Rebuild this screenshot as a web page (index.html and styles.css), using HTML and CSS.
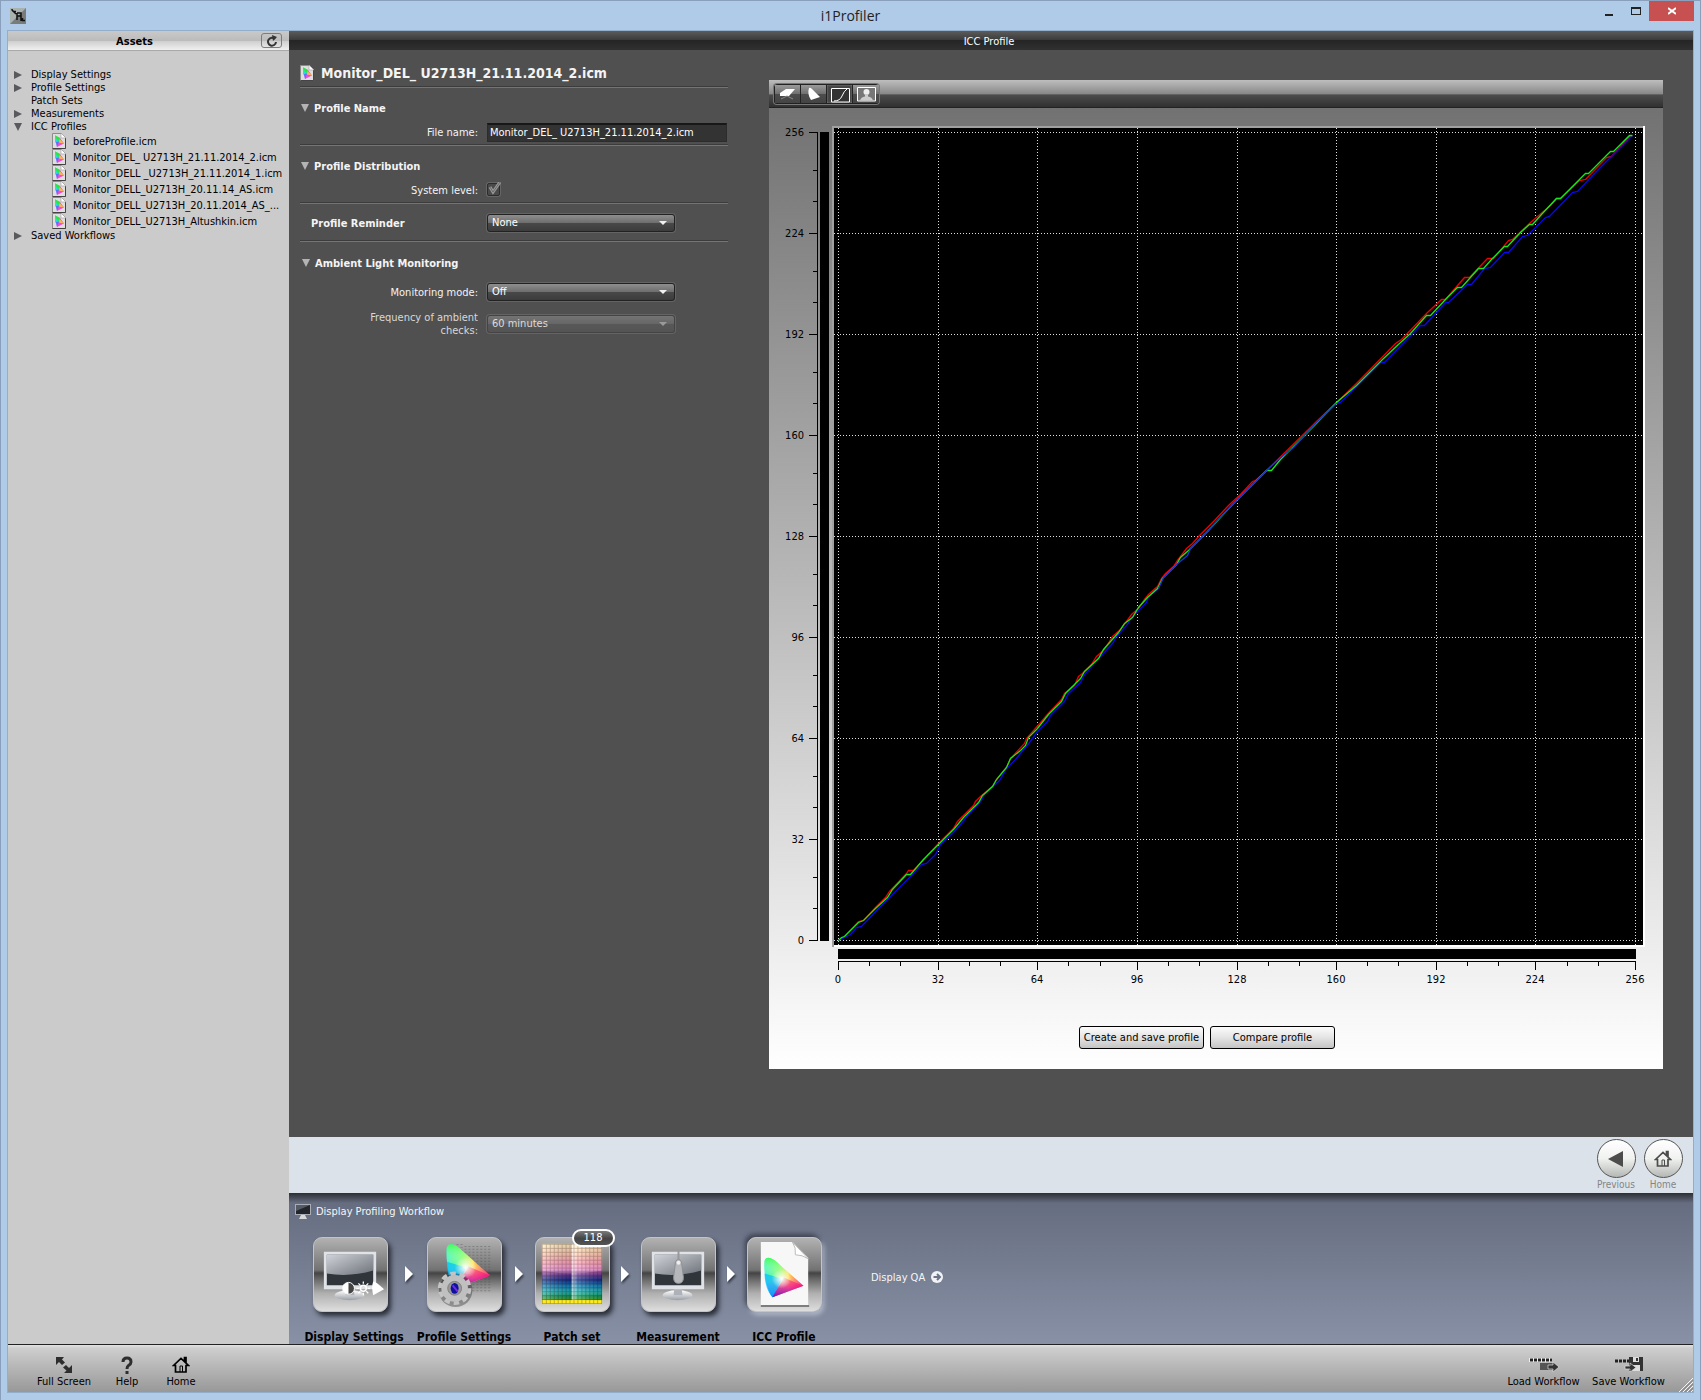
FILE: index.html
```html
<!DOCTYPE html>
<html lang="en">
<head>
<meta charset="utf-8">
<title>i1Profiler</title>
<link rel="stylesheet" href="styles.css">
</head>
<body>
<svg class="defs" aria-hidden="true">
  <defs>
    <linearGradient id="screen" x1="0" y1="0" x2="1" y2="1"><stop offset="0" stop-color="#cfd2d8"/><stop offset="1" stop-color="#6d7179"/></linearGradient>
    <linearGradient id="gloss" x1="0" y1="0" x2="0" y2="1"><stop offset="0" stop-color="#ffffff"/><stop offset="1" stop-color="#9aa0a8"/></linearGradient>
    <linearGradient id="hue" x1="0" y1="0" x2="1" y2="0"><stop offset="0" stop-color="#22f0c8"/><stop offset=".35" stop-color="#7dff6a"/><stop offset=".6" stop-color="#ffe24a"/><stop offset="1" stop-color="#ff1010"/></linearGradient>
    <linearGradient id="hue2" x1="0" y1="0" x2="0" y2="1"><stop offset="0" stop-color="#40ff50" stop-opacity=".9"/><stop offset=".45" stop-color="#ffffff" stop-opacity=".1"/><stop offset=".7" stop-color="#e040ff" stop-opacity=".55"/><stop offset="1" stop-color="#1010ff"/></linearGradient>
    <radialGradient id="white"><stop offset="0" stop-color="#fff"/><stop offset="1" stop-color="#fff" stop-opacity="0"/></radialGradient>
    <linearGradient id="patches" x1="0" y1="0" x2="0" y2="1">
      <stop offset="0" stop-color="#fff2b0"/><stop offset=".16" stop-color="#ffc8a0"/><stop offset=".3" stop-color="#ff98a8"/><stop offset=".42" stop-color="#f88cd0"/><stop offset=".5" stop-color="#7a3c9c"/><stop offset=".6" stop-color="#0c3090"/><stop offset=".7" stop-color="#0a88c0"/><stop offset=".8" stop-color="#18c0b8"/><stop offset=".88" stop-color="#10a050"/><stop offset=".93" stop-color="#40a820"/><stop offset=".94" stop-color="#ffee20"/><stop offset="1" stop-color="#f8e820"/>
    </linearGradient>
    <linearGradient id="patchcols" x1="0" y1="0" x2="1" y2="0">
      <stop offset="0" stop-color="#fff" stop-opacity=".3"/><stop offset=".48" stop-color="#200030" stop-opacity=".15"/><stop offset=".5" stop-color="#fff" stop-opacity=".65"/><stop offset=".6" stop-color="#fff" stop-opacity=".25"/><stop offset="1" stop-color="#300010" stop-opacity=".15"/>
    </linearGradient>
    <pattern id="cells" width="4" height="4" patternUnits="userSpaceOnUse"><path d="M0 0H4M0 0V4" stroke="#20000058" stroke-width="1.500"/></pattern>
  </defs>
  <symbol id="gamut" viewBox="0 0 48 48">
    <path d="M2 6C4-1 12 3 20 11L46 34 11 47C4 38 1 20 2 6Z" fill="url(#hue)"/>
    <path d="M2 6C4-1 12 3 20 11L46 34 11 47C4 38 1 20 2 6Z" fill="url(#hue2)"/>
    <path d="M46 34 11 47 24 25Z" fill="#ff0060" opacity=".45"/>
    <path d="M2 20C2 32 6 42 11 47L22 26Z" fill="#00c0ff" opacity=".7"/>
    <circle cx="21" cy="26" r="11" fill="url(#white)"/>
  </symbol>
  <symbol id="profile" viewBox="0 0 14 16">
    <path d="M.5.5H9.500L13.500 4.500V15.500H.5Z" fill="#dedede" stroke="#8c8c8c"/>
    <path d="M.5 15.500H13.500V5" fill="none" stroke="#444"/>
    <path d="M9 0V5H14Z" fill="#fff" stroke="#999" stroke-width=".6"/>
    <path d="M3 2.500 8 5 12 10.500 5 14Z" fill="#f04ce0"/>
    <path d="M3 2.500 6 4.500 7.500 8 4.500 11 3 9Z" fill="#20e0d8"/>
    <path d="M3 2.500 8 5 8.500 8 5 7Z" fill="#30e830"/><path d="M7.500 6 12 10.500 7 9.500Z" fill="#ffb850"/><path d="M4 9 7 8.500 5 14Z" fill="#5a70ff"/>
  </symbol>
  <symbol id="closed" viewBox="0 0 10 10"><path d="M1 1 9 5 1 9Z" fill="#5a5a5e"/></symbol>
  <symbol id="open" viewBox="0 0 10 10"><path d="M1 1H9L5 9Z" fill="currentColor"/></symbol>
  <symbol id="house" viewBox="0 0 18 18"><path d="M1.500 9.500 9 2.500 16.500 9.500H14V16H3.500V9.500ZM12.500 5V1.500H14V7" fill="none" stroke="currentColor" stroke-width="1.700"/><path d="M8 16V10H10.500V16" fill="none" stroke="currentColor"/></symbol>
  <symbol id="next" viewBox="0 0 8 16"><path d="M0 0 8 8 0 16Z" fill="#fff"/></symbol>
  <symbol id="display" viewBox="0 0 74 74">
    <ellipse cx="36" cy="58" rx="15" ry="5" fill="url(#gloss)"/><path d="M33 50H40L41 58H32Z" fill="#aeb2b8"/>
    <path d="M10 14H63V52H10Z" fill="#dfe2e6"/><path d="M13 17H60V48H13Z" fill="#30343b"/>
    <path d="M13 17H60V33Q36 40 13 36Z" fill="url(#screen)"/>
  </symbol>
</svg>

<div class="window">
  <header class="titlebar">
    <svg class="app-icon" viewBox="0 0 16 16" aria-hidden="true"><rect width="16" height="16" fill="#aab2b0"/><path d="M0 16 16 0V16Z" fill="#777d7b"/><path d="M2 1Q2 4 6 3.500M3 3 6 6M7 5V12M7 5H11V13M7 8H11M12.500 10V12.500H15" fill="none" stroke="#111" stroke-width="1.500"/></svg>
    <h1>i1Profiler</h1>
    <div class="window-buttons">
      <button class="win-btn" aria-label="Minimize"><svg width="10" height="10"><path d="M1 9H9" stroke="#222" stroke-width="2"/></svg></button>
      <button class="win-btn" aria-label="Maximize"><svg width="10" height="8"><path d="M0 0H10V8H0ZM1 2V7H9V2Z" fill="#222" fill-rule="evenodd"/></svg></button>
      <button class="win-btn close" aria-label="Close"><svg width="8" height="8"><path d="M0 1 8 7M8 1 0 7" stroke="#fff" stroke-width="2"/></svg></button>
    </div>
  </header>

  <div class="client">
    <div class="workspace">
      <aside class="sidebar">
        <div class="sidebar-head">
          <h2>Assets</h2>
          <button class="refresh" aria-label="Refresh"><svg width="12" height="12" viewBox="0 0 12 12"><path d="M9 4A4 4 0 1 0 10 7" fill="none" stroke="#333" stroke-width="2"/><path d="M6 0 11 2 7 6Z" fill="#333"/></svg></button>
        </div>
        <ul class="tree">
          <li><svg class="twist"><use href="#closed"/></svg>Display Settings</li>
          <li><svg class="twist"><use href="#closed"/></svg>Profile Settings</li>
          <li><span class="twist"></span>Patch Sets</li>
          <li><svg class="twist"><use href="#closed"/></svg>Measurements</li>
          <li><svg class="twist"><use href="#open"/></svg>ICC Profiles</li>
          <li class="file"><svg class="doc"><use href="#profile"/></svg>beforeProfile.icm</li>
          <li class="file"><svg class="doc"><use href="#profile"/></svg>Monitor_DEL_ U2713H_21.11.2014_2.icm</li>
          <li class="file"><svg class="doc"><use href="#profile"/></svg>Monitor_DELL _U2713H_21.11.2014_1.icm</li>
          <li class="file"><svg class="doc"><use href="#profile"/></svg>Monitor_DELL_U2713H_20.11.14_AS.icm</li>
          <li class="file"><svg class="doc"><use href="#profile"/></svg>Monitor_DELL_U2713H_20.11.2014_AS_...</li>
          <li class="file"><svg class="doc"><use href="#profile"/></svg>Monitor_DELL_U2713H_Altushkin.icm</li>
          <li><svg class="twist"><use href="#closed"/></svg>Saved Workflows</li>
        </ul>
      </aside>

      <main class="main">
        <h2 class="main-head">ICC Profile</h2>
        <div class="content">
          <form class="settings">
            <h3 class="file-title"><svg class="doc"><use href="#profile"/></svg>Monitor_DEL_ U2713H_21.11.2014_2.icm</h3>
            <section class="group name-group">
              <h4><svg class="twist"><use href="#open"/></svg>Profile Name</h4>
              <div class="field"><label for="fname">File name:</label><input id="fname" class="text" type="text" value="Monitor_DEL_ U2713H_21.11.2014_2.icm"></div>
            </section>
            <section class="group dist-group">
              <h4><svg class="twist"><use href="#open"/></svg>Profile Distribution</h4>
              <div class="field"><label for="syslevel">System level:</label><span class="check"><input id="syslevel" type="checkbox" checked disabled><svg viewBox="0 0 14 14" aria-hidden="true"><path d="M3 5 6 10 13 0" fill="none" stroke="#989898" stroke-width="3"/><path d="M3 5 6 10 13 0" fill="none" stroke="#6a6a6a"/></svg></span></div>
            </section>
            <section class="group reminder">
              <div class="field"><label class="strong" for="reminder">Profile Reminder</label><span class="select"><select id="reminder"><option>None</option></select></span></div>
            </section>
            <section class="group ambient">
              <h4><svg class="twist"><use href="#open"/></svg>Ambient Light Monitoring</h4>
              <div class="field"><label for="mode">Monitoring mode:</label><span class="select"><select id="mode"><option>Off</option></select></span></div>
              <div class="field freq"><label for="freq">Frequency of ambient<br>checks:</label><span class="select off"><select id="freq" disabled><option>60 minutes</option></select></span></div>
            </section>
          </form>

          <section class="viewer">
            <div class="toolbar">
              <div class="tools">
                <button aria-label="3D gamut"><svg viewBox="0 0 26 18"><path d="M5 8 11 4H20L14 11H5Z" fill="#fff"/><path d="M6 14 12 11 18 14" fill="none" stroke="#888"/></svg></button>
                <button aria-label="2D gamut"><svg viewBox="0 0 26 18"><path d="M8 3Q9 2 11 4L19 12 10 15Q6 9 8 3Z" fill="#fff"/></svg></button>
                <button class="on" aria-label="Curves"><svg viewBox="0 0 26 18"><path d="M4.500 3.500H22.500V17H4.500Z" fill="#333" stroke="#fff"/><path d="M7 16Q13 16 15 11T20 4" fill="none" stroke="#fff"/></svg></button>
                <button aria-label="Image preview"><svg viewBox="0 0 26 18"><path d="M4.500 2.500H22.500V16H4.500Z" fill="#777" stroke="#fff"/><circle cx="13.500" cy="7" r="3" fill="#eee"/><path d="M7 15.500Q8 12 12 11.500V9H15V11.500Q19 12 20 15.500Z" fill="#ccc"/></svg></button>
              </div>
            </div>
            <div class="viewer-body">
              <svg class="chart" viewBox="769 108 894 882" role="img" aria-label="Tone curves">
                <g shape-rendering="crispEdges">
                  <path d="M832 126H1645V947H832Z" fill="#fff"/>
                  <path d="M832 126H1643V945H834V947H832Z" fill="#a0a0a0"/>
                  <path d="M834 128H1643V945H834Z"/>
                  <path d="M820 132H829V941H820ZM838 949H1636V959H838Z"/>
                  <path d="M838.500 128V945M938.500 128V945M1037.500 128V945M1137.500 128V945M1237.500 128V945M1336.500 128V945M1436.500 128V945M1535.500 128V945M1635.500 128V945M834 132.500H1643M834 233.500H1643M834 334.500H1643M834 435.500H1643M834 536.500H1643M834 637.500H1643M834 738.500H1643M834 839.500H1643M834 940.500H1643" stroke="#e0e0e0" stroke-dasharray="1 2"/>
                  <path d="M817.500 132V941M809 132.500H818M809 233.500H818M809 334.500H818M809 435.500H818M809 536.500H818M809 637.500H818M809 738.500H818M809 839.500H818M809 940.500H818M813 170.500H818M813 201.500H818M813 271.500H818M813 302.500H818M813 372.500H818M813 403.500H818M813 473.500H818M813 504.500H818M813 574.500H818M813 605.500H818M813 675.500H818M813 706.500H818M813 776.500H818M813 807.500H818M813 877.500H818M813 908.500H818" stroke="#000"/>
                  <path d="M838 961.500H1636M838.500 961V970M938.500 961V970M1037.500 961V970M1137.500 961V970M1237.500 961V970M1336.500 961V970M1436.500 961V970M1535.500 961V970M1635.500 961V970M869.500 961V966M900.500 961V966M969.500 961V966M1000.500 961V966M1068.500 961V966M1100.500 961V966M1168.500 961V966M1199.500 961V966M1268.500 961V966M1299.500 961V966M1367.500 961V966M1398.500 961V966M1467.500 961V966M1498.500 961V966M1567.500 961V966M1598.500 961V966" stroke="#000"/>
                </g>
                <g class="curves" transform="translate(.5 .5)">
                  <polyline stroke="#f00000" points="838,940 844,936 858,921 863,920 875,907 885,897 889,891 906,873 908,870 913,870 938,843 953,828 957,821 973,805 975,801 980,796 992,786 996,779 1006,767 1010,758 1024,743 1026,738 1041,721 1046,715 1061,699 1064,693 1074,685 1078,676 1082,673 1091,664 1096,656 1103,650 1109,641 1112,636 1120,629 1126,621 1131,614 1138,608 1144,599 1148,594 1157,586 1161,578 1165,573 1173,566 1177,560 1186,548 1192,543 1199,535 1214,520 1228,505 1240,494 1252,481 1255,480 1265,471 1310,427 1315,422 1336,402 1356,383 1395,343 1401,339 1427,312 1441,299 1445,299 1464,277 1469,277 1487,258 1493,258 1508,240 1512,239 1530,222 1550,205 1556,198 1560,198 1579,180 1585,179 1606,157 1611,156 1630,135"/>
                  <polyline stroke="#0808f0" points="838,940 850,934 856,927 861,926 878,908 895,891 910,876 921,864 926,863 935,854 940,844 952,833 961,823 967,815 980,801 984,794 999,780 1006,768 1015,759 1029,742 1037,731 1047,721 1050,715 1064,701 1068,693 1080,682 1084,674 1098,658 1112,643 1116,636 1127,624 1130,618 1137,611 1146,602 1148,596 1158,588"/>
                  <polyline stroke="#0808f0" points="1336,403 1340,402 1358,384 1380,362 1384,362 1420,325 1424,325 1445,302 1448,302 1467,284 1471,284 1484,268 1490,267 1504,252 1508,252 1522,236 1527,235 1545,217 1549,216 1572,192 1577,191 1600,167 1632,135"/>
                  <polyline stroke="#18e818" points="838,940 841,937 844,936 858,922 863,920 875,908 887,897 892,889 906,874 910,874 923,859 938,844 954,828 963,817 978,802 982,795 992,786 996,779 1006,767 1010,758 1020,750 1025,745 1028,737 1037,728 1048,714 1061,701 1065,693 1080,678 1084,671 1098,658 1103,649 1118,632 1124,623 1132,617 1138,607 1147,597 1157,588 1162,578 1176,564 1180,557 1188,550 1207,531 1232,504 1266,470 1268,470 1271,470 1280,459 1313,426 1336,402 1356,385 1382,359 1399,343 1410,333 1426,315 1430,315 1445,299 1457,287 1461,287 1478,268 1483,268 1491,259 1504,246 1507,246 1520,232 1529,224 1532,224 1541,214 1556,198 1560,198 1570,188 1585,173 1588,173 1597,164 1610,151 1613,151 1629,135 1632,135"/>
                  <polyline stroke="#1238d0" points="1158,588 1163,577 1176,564 1187,555 1190,548 1207,531 1215,522 1232,504 1250,486 1266,470 1279,458 1293,447 1316,422 1336,403"/>
                </g>
                <g class="labels-y">
                  <text x="804" y="136">256</text><text x="804" y="237">224</text><text x="804" y="338">192</text><text x="804" y="439">160</text><text x="804" y="540">128</text><text x="804" y="641">96</text><text x="804" y="742">64</text><text x="804" y="843">32</text><text x="804" y="944">0</text>
                </g>
                <g class="labels-x">
                  <text x="838" y="983">0</text><text x="938" y="983">32</text><text x="1037" y="983">64</text><text x="1137" y="983">96</text><text x="1237" y="983">128</text><text x="1336" y="983">160</text><text x="1436" y="983">192</text><text x="1535" y="983">224</text><text x="1635" y="983">256</text>
                </g>
              </svg>
              <div class="actions">
                <button>Create and save profile</button>
                <button>Compare profile</button>
              </div>
            </div>
          </section>
        </div>

        <nav class="nav-strip">
          <button class="round"><span><svg width="18" height="16" viewBox="0 0 18 16"><path d="M1 8 16 0V16Z" fill="#4c4c4c"/></svg></span>Previous</button>
          <button class="round"><span><svg width="18" height="18"><use href="#house"/></svg></span>Home</button>
        </nav>

        <section class="workflow">
          <h3><svg width="16" height="15" viewBox="0 0 16 15"><path d="M0 0H16V11H0Z" fill="#a9adb4"/><path d="M1 1H15V10H1Z" fill="#22262c"/><path d="M1 1H15L1 7Z" fill="#555b66"/><path d="M6 11H10L12 15H4Z" fill="#d8d8d8"/></svg>Display Profiling Workflow</h3>
          <div class="flow">
            <ol class="steps">
              <li class="first"><button class="step"><span class="tile"><svg viewBox="0 0 74 74"><use href="#display"/><circle cx="35" cy="51" r="6" fill="#444" stroke="#fff"/><path d="M35 45A6 6 0 0 0 35 57Z" fill="#fff"/><circle cx="50" cy="51" r="3" fill="none" stroke="#fff" stroke-width="1.500"/><path d="M50 44V46.500M50 55.500V58M43 51H45.500M54.500 51H57M45 46 47 48M53 54 55 56M45 56 47 54M53 48 55 46" stroke="#fff" stroke-width="1.300"/><path d="M60 44Q63 44 71 52L60 58Q58 50 60 44Z" fill="#fff"/></svg></span>Display Settings</button></li>
              <li class="arrow"><svg width="8" height="16"><use href="#next"/></svg></li>
              <li><button class="step"><span class="tile"><svg viewBox="0 0 74 74"><g stroke="#444" stroke-opacity=".35"><path d="M30 6V30M34 6V30M38 8V56M42 8V56M46 8V56M50 8V56M54 8V56M58 8V56M62 8V56" stroke-dasharray="1 2" stroke-width="2"/></g><svg x="16" y="4" width="50" height="48" preserveAspectRatio="none"><use href="#gamut"/></svg><circle cx="28" cy="53" r="17" fill="#000" opacity=".3"/><circle cx="27" cy="51" r="15" fill="none" stroke="#c4c4c4" stroke-width="4" stroke-dasharray="5.500 3.925"/><circle cx="27" cy="51" r="9.500" fill="#b0b0b0" stroke="#c0c0c0" stroke-width="8"/><circle cx="27" cy="51" r="7" fill="#999" stroke="#808080"/><ellipse cx="27" cy="51" rx="4" ry="5.500" fill="#1010a0"/><path d="M25 48 30 54" stroke="#7030e0" stroke-width="2"/></svg></span>Profile Settings</button></li>
              <li class="arrow"><svg width="8" height="16"><use href="#next"/></svg></li>
              <li><button class="step"><span class="tile"><svg viewBox="0 0 74 74"><g transform="translate(6 6)"><rect width="61" height="61" fill="url(#patches)"/><rect width="61" height="57" fill="url(#patchcols)"/><rect width="61" height="61" fill="url(#cells)"/><path d="M0 0H61V27Q30 33 0 27Z" fill="#fff" opacity=".15"/></g></svg><span class="badge">118</span></span>Patch set</button></li>
              <li class="arrow"><svg width="8" height="16"><use href="#next"/></svg></li>
              <li><button class="step"><span class="tile"><svg viewBox="0 0 74 74"><use href="#display"/><path d="M37 13V24" stroke="#999" stroke-width="2"/><path d="M34 24Q37 19 40 24L42 40Q42 46 37 46T32 40Z" fill="#b5b7ba" stroke="#8d8f93"/><circle cx="37" cy="25" r="2" fill="#eee"/></svg></span>Measurement</button></li>
              <li class="arrow"><svg width="8" height="16"><use href="#next"/></svg></li>
              <li><button class="step current"><span class="tile"><svg viewBox="0 0 74 74"><path d="M13 69H62" stroke="#0006" stroke-width="2"/><path d="M13 4H45L61 20V68H13Z" fill="#f7f7f7"/><path d="M45 4Q49 10 48 17 55 17 61 21Z" fill="#fff" stroke="#bbb"/><svg x="15" y="16" width="43" height="47"><use href="#gamut"/></svg></svg></span>ICC Profile</button></li>
            </ol>
            <a class="qa" href="#qa">Display QA<svg width="12" height="12" viewBox="0 0 12 12"><circle cx="6" cy="6" r="6" fill="#f2f3f6"/><path d="M2.500 6H9M6 3 9 6 6 9" fill="none" stroke="#6b7488" stroke-width="2"/></svg></a>
          </div>
        </section>
      </main>
    </div>

    <footer class="footer">
      <button class="narrow wide-label"><svg width="18" height="18" viewBox="0 0 18 18"><path d="M1 1H9L7 3.500 10 6.500 7 9 4 6 1 9ZM17 17H9L11.500 14.500 8 11.500 11 9 14 12 17 9Z" fill="#2e2e2e"/></svg>Full Screen</button>
      <button class="narrow"><svg width="18" height="18" viewBox="0 0 18 18"><path d="M5 6Q5 2 9 2T13 6Q13 8 10.500 9.500 9 10.500 9 13" fill="none" stroke="#2e2e2e" stroke-width="3"/><path d="M7.500 15H10.500V18H7.500Z" fill="#2e2e2e"/></svg>Help</button>
      <button class="narrow"><svg width="18" height="18"><use href="#house"/></svg>Home</button>
      <span class="grow"></span>
      <button class="wide"><svg width="32" height="18" viewBox="0 0 32 18"><path d="M1 2H24V6H1Z" fill="#eee"/><path d="M2 4H24" stroke="#222" stroke-width="3" stroke-dasharray="3 1"/><path d="M12 7H26V14H12Z" fill="#555"/><path d="M20 9H25V6L31 11 25 16V13H20Z" fill="#333" stroke="#ddd" stroke-width=".7"/></svg>Load Workflow</button>
      <button class="wide"><svg width="32" height="18" viewBox="0 0 32 18"><path d="M2 5H18" stroke="#222" stroke-width="3" stroke-dasharray="3 1"/><path d="M16 1H30V15H16Z" fill="#333"/><path d="M20 1H26V6H20ZM19 9H27V15H19Z" fill="#ddd"/><path d="M24 2V5" stroke="#333" stroke-width="2"/><path d="M12 10H17V7L23 11.500 17 16V13H12Z" fill="#333" stroke="#ddd" stroke-width=".7"/></svg>Save Workflow</button>
      <svg class="grip" width="14" height="14" viewBox="0 0 14 14"><path d="M0 14 14 0M4 14 14 4M8 14 14 8M12 14 14 12" stroke="#f4f4f4"/><path d="M1 15 15 1M5 15 15 5M9 15 15 9" stroke="#888"/></svg>
    </footer>
  </div>
</div>
</body>
</html>
```
FILE: styles.css
```css
* { box-sizing: border-box; }
body, h1, h2, h3, h4, ul, ol { margin: 0; padding: 0; }
ul, ol { list-style: none; }
body, button, input, select {
  font-family: "DejaVu Sans Condensed", "Noto Sans", sans-serif;
  font-size: 11px;
}
button { border: 0; padding: 0; background: none; color: inherit; }
svg { display: block; flex: none; }
.defs { position: absolute; width: 0; height: 0; }

.window {
  min-height: 100vh;
  display: flex;
  flex-direction: column;
  border: 1px solid #8a9fbb;
  background: #b0cbe8;
  padding: 0 6px 7px;
}
.titlebar {
  display: grid;
  grid-template-columns: 1fr auto 1fr;
  height: 29px;
  align-items: center;
}
.titlebar h1 { font: 14px/29px "Open Sans", sans-serif; color: #222; }
.app-icon { width: 16px; height: 16px; margin-left: 3px; }
.window-buttons { display: flex; justify-content: flex-end; align-self: start; }
.win-btn { width: 27px; height: 20px; display: grid; place-items: center; }
.win-btn.close { width: 45px; background: #c75050; }

.client {
  flex: 1;
  display: flex;
  flex-direction: column;
  border: 1px solid #93aecb;
}
.workspace { flex: 1; display: flex; }

.sidebar { width: 281px; flex: none; background: #cbcbcb; }
.sidebar-head {
  display: flex;
  align-items: center;
  height: 20px;
  padding-right: 7px;
  background: linear-gradient(#c9c9c9, #bcbcbc 50%, #d0d0d0 55%, #f0f0f0);
  border-bottom: 1px solid #a9a9a9;
}
.sidebar-head h2 { flex: 1; padding-top: 3px; text-align: center; font-size: 11px; line-height: 16px; }
.refresh {
  width: 21px;
  height: 15px;
  display: grid;
  place-items: center;
  border: 1px solid #7c7c7c;
  border-radius: 3px;
}
.tree { padding-top: 17px; white-space: nowrap; }
.tree li { display: flex; align-items: center; height: 13px; padding-left: 5px; }
.tree .twist { margin-right: 8px; }
.tree li.file { height: 16px; padding-left: 44px; }
.tree .doc { margin-right: 7px; }
.twist { width: 10px; height: 10px; color: #5a5a5e; }
.doc { width: 14px; height: 16px; }

.main { flex: 1; min-width: 0; display: flex; flex-direction: column; background: #505050; }
.main-head {
  height: 19px;
  padding: 2px 4px 0 0;
  font-size: 11px;
  font-weight: normal;
  line-height: 17px;
  text-align: center;
  color: #fff;
  background: linear-gradient(#5c5c5c, #3a3a3a 48%, #252525 50%, #303030);
}
.content { flex: 1; display: flex; align-items: flex-start; padding: 0 30px 68px 11px; color: #f4f4f4; }

.settings { width: 428px; flex: none; margin-right: 41px; }
.file-title {
  display: flex;
  align-items: center;
  gap: 7px;
  height: 36px;
  padding-top: 9px;
  font-size: 14px;
  white-space: nowrap;
}
.group { border-top: 1px solid #3c3c3c; box-shadow: inset 0 1px #747474; }
.group h4 { display: flex; align-items: center; gap: 4px; height: 16px; font-size: 11px; }
.group h4 .twist { color: #b4b4b4; }
.field { display: flex; align-items: center; gap: 9px; }
.field label { width: 178px; text-align: right; line-height: 13px; }
.field .strong { padding-left: 11px; text-align: left; font-weight: bold; }
.name-group { height: 58px; padding-top: 13px; }
.name-group .field { margin-top: 7px; }
.dist-group { height: 58px; padding-top: 13px; }
.dist-group .field { margin-top: 9px; }
.reminder { height: 38px; padding-top: 11px; }
.ambient { padding-top: 14px; }
.ambient h4 { padding-left: 1px; }
.ambient .field { margin-top: 12px; }
.ambient .freq { margin-top: 10px; color: #d8d8d8; }
.text {
  width: 240px;
  height: 19px;
  padding: 0 2px 1px;
  border: 1px solid #2c2c2c;
  border-top: 2px solid #181818;
  background: #333;
  color: #fff;
}
.check { position: relative; width: 14px; height: 14px; }
.check input {
  appearance: none;
  width: 13px;
  height: 13px;
  margin: 0;
  border: 1px solid #2c2c2c;
  border-radius: 2px;
  background: #4a4a4a;
  box-shadow: 0 0 0 1px #666;
  display: block;
}
.check svg { position: absolute; inset: -1px 0 0 0; }
.select { position: relative; }
.select select {
  appearance: none;
  display: block;
  width: 188px;
  height: 18px;
  padding: 0 4px 2px;
  border: 1px solid #222;
  border-radius: 3px;
  background: linear-gradient(#8e8e8e, #6e6e6e 48%, #484848 52%, #3c3c3c);
  box-shadow: 0 0 0 1px #646464;
  color: #fff;
}
.select::after {
  content: "";
  position: absolute;
  right: 8px;
  top: 7px;
  border: 4px solid transparent;
  border-top: 4px solid #f0f0f0;
  border-bottom: 0;
}
.select.off select { background: linear-gradient(#747474, #666 48%, #575757 52%, #545454); border-color: #444; color: #dcdcdc; opacity: 1; }
.select.off::after { border-top-color: #9a9a9a; }

.viewer { flex: 1; min-width: 0; margin-top: 30px; }
.toolbar {
  height: 28px;
  padding: 4px 5px;
  background: linear-gradient(#bebebe, #8a8a8a 50%, #4c4c4c 56%, #303030);
  border-bottom: 1px solid #222;
}
.tools { display: flex; width: 105px; height: 20px; border: 1px solid #222; border-radius: 3px; box-shadow: 0 0 0 1px #777; }
.tools button { width: 26px; height: 18px; border-right: 1px solid #222; background: linear-gradient(#9a9a9a, #707070 48%, #4c4c4c 52%, #444); }
.tools button:last-child { border-right: 0; }
.tools .on { background: #444; box-shadow: inset 0 0 2px #999; }
.tools svg { width: 26px; height: 18px; }
.viewer-body { background: linear-gradient(#727272, #fff); color: #000; padding-bottom: 20px; }
.chart { width: 100%; height: auto; font-size: 11px; }
.curves { fill: none; stroke-width: 1.3; }
.labels-y { text-anchor: end; }
.labels-x { text-anchor: middle; }
.actions { display: flex; justify-content: center; gap: 6px; margin-top: 36px; padding-right: 18px; }
.actions button {
  width: 125px;
  height: 23px;
  border: 1px solid #000;
  border-radius: 3px;
  background: linear-gradient(#fcfcfc, #e4e4e4 50%, #c4c4c4);
  white-space: nowrap;
}

.nav-strip { display: flex; justify-content: flex-end; gap: 7px; height: 56px; padding: 2px 10px 0 0; background: #dce2ea; }
.round { width: 40px; display: flex; flex-direction: column; align-items: center; color: #858585; font-size: 10px; line-height: 13px; }
.round span {
  width: 39px;
  height: 39px;
  display: grid;
  place-items: center;
  border: 1px solid #555;
  border-radius: 50%;
  background: linear-gradient(#fff, #f0f2f0 50%, #b4b8b4);
  color: #4c4c4c;
}

.workflow {
  height: 151px;
  padding: 10px 6px 0;
  background: linear-gradient(#2c2e33, #666d80 10px, #8891a6);
}
.workflow h3 { display: flex; align-items: center; gap: 5px; height: 17px; font-size: 11px; font-weight: normal; color: #f6f6f6; }
.flow { display: flex; padding: 17px 9px 0; }
.steps { display: flex; }
.steps li { width: 100px; }
.steps li.arrow { width: 10px; padding: 29px 1px 0; }
.steps li:nth-child(n+5):not(.arrow) { width: 96px; }
.step {
  width: 100%;
  display: flex;
  flex-direction: column;
  align-items: center;
  gap: 18px;
  color: #000;
  font-size: 12px;
  font-weight: bold;
  line-height: 14px;
  white-space: nowrap;
}
.tile {
  position: relative;
  width: 75px;
  height: 75px;
  border-radius: 9px;
  border: 1px solid #c4c4c4;
  background: linear-gradient(#b2b2b2, #727272 44%, #444 48%, #666 56%, #b0b0b0 76%, #dedede);
  box-shadow: 3px 4px 5px #2a2e38;
}
.first .tile { margin-right: 8px; }
.tile > svg { width: 73px; height: 73px; }
.arrow svg { filter: drop-shadow(1px 2px 1px #333a48); }
.current .tile { box-shadow: -2px -3px 5px #3c4250, 2px 3px 5px #b4bccc; }
.badge {
  position: absolute;
  right: -6px;
  top: -9px;
  width: 43px;
  height: 18px;
  border: 2px solid #fff;
  border-radius: 9px;
  background: linear-gradient(#7a7a7a, #444 55%, #555);
  color: #fff;
  font-size: 11px;
  font-weight: normal;
  line-height: 14px;
  text-align: center;
}
.qa { display: flex; align-items: center; gap: 6px; height: 14px; margin: 33px 0 0 39px; color: #f6f6f6; text-decoration: none; }

.footer {
  position: relative;
  display: flex;
  height: 48px;
  padding: 11px 22px 0 20px;
  border-top: 1px solid #222;
  background: linear-gradient(#e2e2e2, #cecece 3px, #989898);
}
.footer button { display: flex; flex-direction: column; align-items: center; line-height: 14px; gap: 1px; white-space: nowrap; color: #000; }
.footer .narrow { width: 54px; }
.footer .narrow.wide-label { width: 72px; }
.footer .wide { width: 85px; }
.grow { flex: 1; }
.grip { position: absolute; right: 0; bottom: 0; }
```
